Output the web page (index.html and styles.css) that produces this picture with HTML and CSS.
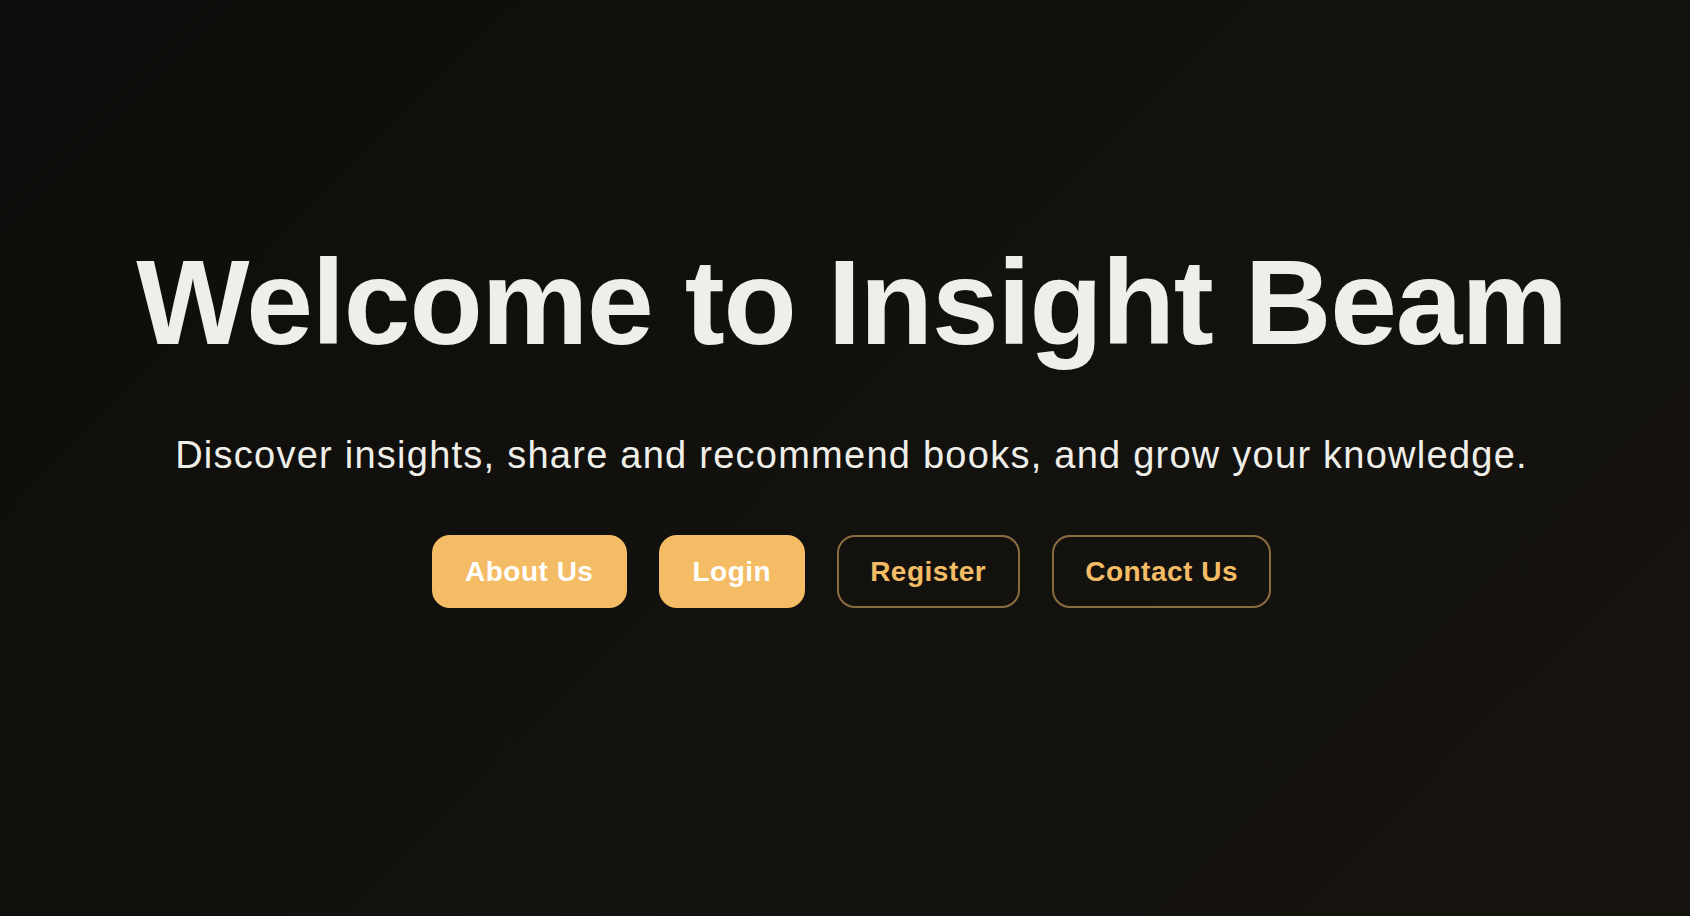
FILE: index.html
```html
<!DOCTYPE html>
<html lang="en">
<head>
<meta charset="utf-8">
<title>Insight Beam</title>
<link rel="stylesheet" href="styles.css">
</head>
<body>
<main class="hero">
  <h1 class="hero-title">Welcome to Insight Beam</h1>
  <p class="hero-sub">Discover insights, share and recommend books, and grow your knowledge.</p>
  <div class="hero-actions">
    <a class="btn btn-solid" href="#">About Us</a>
    <a class="btn btn-solid" href="#">Login</a>
    <a class="btn btn-outline" href="#">Register</a>
    <a class="btn btn-outline" href="#">Contact Us</a>
  </div>
</main>
</body>
</html>
```
FILE: styles.css
```css
html, body {
  margin: 0;
  padding: 0;
  height: 100%;
}
body {
  background: linear-gradient(135deg, #0e0d0b 0%, #12110e 50%, #17140f 100%);
  color: #efeee9;
  font-family: "Liberation Sans", Arial, Helvetica, sans-serif;
  overflow: hidden;
}
.hero {
  display: flex;
  flex-direction: column;
  align-items: center;
  padding-top: 230px;
  padding-left: 13px;
  box-sizing: border-box;
  min-height: 100vh;
}
.hero-title {
  margin: 0;
  font-size: 120px;
  line-height: 144px;
  font-weight: 700;
  letter-spacing: -1.2px;
  color: #efeee9;
}
.hero-sub {
  margin: 54px 0 0;
  font-size: 38px;
  line-height: 54px;
  font-weight: 400;
  letter-spacing: 1.25px;
  color: #efeee9;
}
.hero-actions {
  display: flex;
  gap: 32px;
  margin-top: 53px;
}
.btn {
  display: inline-block;
  font-size: 28px;
  line-height: 32px;
  font-weight: 700;
  letter-spacing: 0.5px;
  padding: 18.5px 31.5px;
  border: 2px solid #f4bc64;
  border-radius: 18px;
  text-decoration: none;
}
.btn-solid {
  background: #f4bc64;
  color: #ffffff;
}
.btn-outline {
  background: transparent;
  color: #f4bc64;
  border-color: #8b6c3f;
}
```
